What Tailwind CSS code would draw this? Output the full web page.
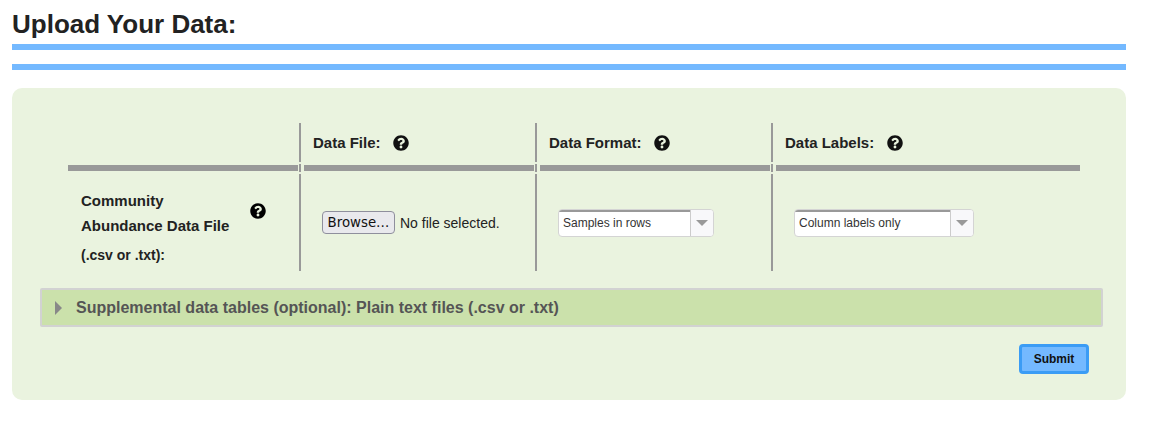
<!DOCTYPE html>
<html lang="en">
<head>
  <meta charset="UTF-8" />
  <title>Upload Your Data</title>
  <script src="https://cdn.jsdelivr.net/npm/@tailwindcss/browser@4"></script>
</head>
<body class="bg-white font-['Liberation_Sans',Arial,sans-serif] text-[#222]">
  <div class="w-[1114px] ml-[12px]">
    <h1 class="text-[26px] leading-[31px] font-bold pt-[9px] h-[44px]">Upload Your Data:</h1>
    <div class="h-[6px] bg-[#74b9ff]"></div>
    <div class="h-[6px] bg-[#74b9ff] mt-[14px]"></div>

    <!-- Upload panel -->
    <div class="mt-[18px] h-[312px] bg-[#eaf3df] rounded-[10px] pt-[35px]">
      <div class="ml-[56px] grid grid-cols-[233px_236px_236px_307px] grid-rows-[39px_8px_97px] gap-y-[2px]">
        <!-- header row -->
        <div class="border-r-2 border-[#999]"></div>
        <div class="border-r-2 border-[#999] pl-[12px] flex items-center pt-[1px] text-[15px] font-bold">
          <span>Data File:</span>
          <svg class="w-4 h-4 ml-[12px]" viewBox="0 0 512 512"><path fill="#111" d="M504 256c0 136.997-111.043 248-248 248S8 392.997 8 256C8 119.083 119.043 8 256 8s248 111.083 248 248zM262.655 90c-54.497 0-89.255 22.957-116.549 63.758-3.536 5.286-2.353 12.415 2.715 16.258l34.699 26.31c5.205 3.947 12.621 3.008 16.665-2.122 17.864-22.658 30.113-35.797 57.303-35.797 20.429 0 45.698 13.148 45.698 32.958 0 14.976-12.363 22.667-32.534 33.976C247.128 238.528 216 254.941 216 296v4c0 6.627 5.373 12 12 12h56c6.627 0 12-5.373 12-12v-1.333c0-28.462 83.186-29.647 83.186-106.667 0-58.002-60.165-102-116.531-102zM256 338c-25.365 0-46 20.635-46 46 0 25.364 20.635 46 46 46s46-20.636 46-46c0-25.365-20.635-46-46-46z"/></svg>
        </div>
        <div class="border-r-2 border-[#999] pl-[12px] flex items-center pt-[1px] text-[15px] font-bold">
          <span>Data Format:</span>
          <svg class="w-4 h-4 ml-[12px]" viewBox="0 0 512 512"><path fill="#111" d="M504 256c0 136.997-111.043 248-248 248S8 392.997 8 256C8 119.083 119.043 8 256 8s248 111.083 248 248zM262.655 90c-54.497 0-89.255 22.957-116.549 63.758-3.536 5.286-2.353 12.415 2.715 16.258l34.699 26.31c5.205 3.947 12.621 3.008 16.665-2.122 17.864-22.658 30.113-35.797 57.303-35.797 20.429 0 45.698 13.148 45.698 32.958 0 14.976-12.363 22.667-32.534 33.976C247.128 238.528 216 254.941 216 296v4c0 6.627 5.373 12 12 12h56c6.627 0 12-5.373 12-12v-1.333c0-28.462 83.186-29.647 83.186-106.667 0-58.002-60.165-102-116.531-102zM256 338c-25.365 0-46 20.635-46 46 0 25.364 20.635 46 46 46s46-20.636 46-46c0-25.365-20.635-46-46-46z"/></svg>
        </div>
        <div class="pl-[12px] flex items-center pt-[1px] text-[15px] font-bold">
          <span>Data Labels:</span>
          <svg class="w-4 h-4 ml-[13px]" viewBox="0 0 512 512"><path fill="#111" d="M504 256c0 136.997-111.043 248-248 248S8 392.997 8 256C8 119.083 119.043 8 256 8s248 111.083 248 248zM262.655 90c-54.497 0-89.255 22.957-116.549 63.758-3.536 5.286-2.353 12.415 2.715 16.258l34.699 26.31c5.205 3.947 12.621 3.008 16.665-2.122 17.864-22.658 30.113-35.797 57.303-35.797 20.429 0 45.698 13.148 45.698 32.958 0 14.976-12.363 22.667-32.534 33.976C247.128 238.528 216 254.941 216 296v4c0 6.627 5.373 12 12 12h56c6.627 0 12-5.373 12-12v-1.333c0-28.462 83.186-29.647 83.186-106.667 0-58.002-60.165-102-116.531-102zM256 338c-25.365 0-46 20.635-46 46 0 25.364 20.635 46 46 46s46-20.636 46-46c0-25.365-20.635-46-46-46z"/></svg>
        </div>

        <!-- separator row -->
        <div class="border-r-2 border-[#999] py-[1px] pr-[1px]"><div class="h-[6px] bg-[#999]"></div></div>
        <div class="border-r-2 border-[#999] py-[1px] pl-[3px] pr-[1px]"><div class="h-[6px] bg-[#999]"></div></div>
        <div class="border-r-2 border-[#999] py-[1px] pl-[3px] pr-[1px]"><div class="h-[6px] bg-[#999]"></div></div>
        <div class="py-[1px] pl-[3px]"><div class="h-[6px] bg-[#999]"></div></div>

        <!-- body row -->
        <div class="border-r-2 border-[#999] pl-[13px] relative font-bold">
          <div class="text-[15px] leading-[25px] pt-[14px]">Community</div>
          <div class="text-[15px] leading-[25px]">Abundance Data File</div>
          <div class="text-[14px] leading-[25px] mt-[5px]">(.csv or .txt):</div>
          <svg class="w-4 h-4 absolute left-[181.5px] top-[28.5px]" viewBox="0 0 512 512"><path fill="#000" d="M504 256c0 136.997-111.043 248-248 248S8 392.997 8 256C8 119.083 119.043 8 256 8s248 111.083 248 248zM262.655 90c-54.497 0-89.255 22.957-116.549 63.758-3.536 5.286-2.353 12.415 2.715 16.258l34.699 26.31c5.205 3.947 12.621 3.008 16.665-2.122 17.864-22.658 30.113-35.797 57.303-35.797 20.429 0 45.698 13.148 45.698 32.958 0 14.976-12.363 22.667-32.534 33.976C247.128 238.528 216 254.941 216 296v4c0 6.627 5.373 12 12 12h56c6.627 0 12-5.373 12-12v-1.333c0-28.462 83.186-29.647 83.186-106.667 0-58.002-60.165-102-116.531-102zM256 338c-25.365 0-46 20.635-46 46 0 25.364 20.635 46 46 46s46-20.636 46-46c0-25.365-20.635-46-46-46z"/></svg>
        </div>
        <div class="border-r-2 border-[#999] pl-[21px] pt-[37px]">
          <div class="flex items-center">
            <button class="w-[73px] h-[23px] bg-[#e9e9ed] border border-[#8f8f9d] rounded-[4px] text-[13.33px] leading-none font-['DejaVu_Sans',sans-serif] text-[#111]">Browse…</button>
            <span class="ml-[5px] pt-[1px] text-[14px] text-[#222]">No file selected.</span>
          </div>
        </div>
        <div class="border-r-2 border-[#999] pl-[21px] pt-[35px]">
          <div class="w-[156px] h-[28px] flex bg-white border border-[#d4d4d4] rounded-[4px] overflow-hidden">
            <div class="flex-1 border-t-2 border-[#999] pl-[4px] text-[12px] leading-[22px] text-[#333]">Samples in rows</div>
            <div class="w-[23px] bg-[#f8f8fa] border-l border-[#ccc] flex items-center justify-center"><div class="w-0 h-0 border-x-[6px] border-x-transparent border-t-[6px] border-t-[#999]"></div></div>
          </div>
        </div>
        <div class="pl-[21px] pt-[35px]">
          <div class="w-[180px] h-[28px] flex bg-white border border-[#d4d4d4] rounded-[4px] overflow-hidden">
            <div class="flex-1 border-t-2 border-[#999] pl-[4px] text-[12px] leading-[22px] text-[#333]">Column labels only</div>
            <div class="w-[23px] bg-[#f8f8fa] border-l border-[#ccc] flex items-center justify-center"><div class="w-0 h-0 border-x-[6px] border-x-transparent border-t-[6px] border-t-[#999]"></div></div>
          </div>
        </div>
      </div>

      <!-- Supplemental accordion -->
      <div class="mt-[17px] ml-[28px] w-[1063px] h-[39px] bg-[#cbe1ab] border-2 border-[#d2d2d2] rounded-[2px] flex items-center pl-[13px]">
        <div class="w-0 h-0 border-y-[7px] border-y-transparent border-l-[7px] border-l-[#888]"></div>
        <span class="ml-[14px] text-[16px] font-bold text-[#555]">Supplemental data tables (optional): Plain text files (.csv or .txt)</span>
      </div>

      <div class="flex justify-end mt-[17px] mr-[37px]">
        <button class="w-[70px] h-[30px] bg-[#74b9ff] border-[3px] border-[#3b9cf5] rounded-[4px] text-[12px] font-bold text-[#111]">Submit</button>
      </div>
    </div>
  </div>
</body>
</html>
